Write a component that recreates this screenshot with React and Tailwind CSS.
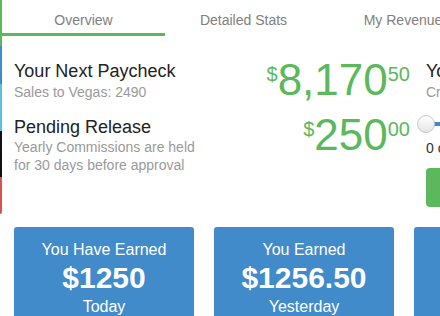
const font = { fontFamily: '"Liberation Sans", Arial, sans-serif' };

const Amount = ({ whole, cents }) => (
  <div className="flex items-start justify-end text-[#5cb85c]">
    <span className="text-[20px] leading-none mt-[6px]">$</span>
    <span className="text-[44px] leading-none">{whole}</span>
    <span className="text-[20px] leading-none mt-[6px]">{cents}</span>
  </div>
);

const EarnCard = ({ title, amount, when }) => (
  <div className="w-[180px] h-[120px] shrink-0 rounded-[3px] bg-[#428bca] text-white text-center pt-3">
    <div className="text-[16px] leading-[22px]">{title}</div>
    <div className="text-[30px] leading-[33px] font-bold">{amount}</div>
    <div className="text-[16px] leading-[22px] mt-[2px]">{when}</div>
  </div>
);

export default function App() {
  return (
    <div className="w-screen h-screen overflow-hidden bg-white" style={font}>
      <div className="flex w-[900px]">
        {/* collapsed side menu */}
        <div className="w-[2px] shrink-0 flex flex-col">
          <div className="h-[46px] bg-[#5cb85c]" />
          <div className="h-[38px] bg-[#428bca]" />
          <div className="h-[47px] bg-[#5bc0de]" />
          <div className="h-[46px] bg-[#111]" />
          <div className="h-[37px] bg-[#d9534f] rounded-br-[2px]" />
        </div>

        <div className="flex-1">
          {/* tabs */}
          <div className="flex text-[14px] leading-5 text-[#808080]">
            <div className="w-[163px] text-center pt-[10px] pb-[3px] border-b-[3px] border-[#5cb85c]">Overview</div>
            <div className="w-[157px] text-center pt-[10px] pb-[6px]">Detailed Stats</div>
            <div className="w-[169px] text-center pt-[10px] pb-[6px]">My Revenues</div>
          </div>

          <div className="pl-[12px] pt-[22px]">
            <div className="flex">
              <div className="w-[396px] shrink-0">
                <div className="flex justify-between">
                  <div className="pt-[3px]">
                    <div className="text-[18px] leading-5 text-[#222]">Your Next Paycheck</div>
                    <div className="text-[14px] leading-5 text-[#9a9a9a] mt-px">Sales to Vegas: 2490</div>
                  </div>
                  <Amount whole="8,170" cents="50" />
                </div>
                <div className="flex justify-between mt-[11px]">
                  <div className="pt-[4px]">
                    <div className="text-[18px] leading-5 text-[#222]">Pending Release</div>
                    <div className="text-[14px] leading-[18px] text-[#9a9a9a] mt-px">
                      Yearly Commissions are held
                      <br />
                      for 30 days before approval
                    </div>
                  </div>
                  <Amount whole="250" cents="00" />
                </div>
              </div>

              <div className="ml-[16px] w-[220px] shrink-0 pt-[3px]">
                <div className="text-[18px] leading-5 text-[#222]">Your Commission Rate</div>
                <div className="text-[14px] leading-5 text-[#9a9a9a] mt-px">Credits to spend</div>
                <div className="relative h-[18px] mt-[13px]">
                  <div className="absolute left-0 right-0 top-[7px] h-[4px] bg-[#428bca] rounded" />
                  <div className="absolute left-[-9px] top-0 w-[18px] h-[18px] rounded-full border border-[#c8c8c8] bg-gradient-to-b from-white to-[#e6e6e6]" />
                </div>
                <div className="text-[14px] leading-5 text-[#333] mt-[5px]">0 credits selected</div>
                <button className="mt-[10px] h-[39px] px-4 rounded-[4px] bg-[#5cb85c] text-white text-[14px]">
                  Apply Credits
                </button>
              </div>
            </div>

            <div className="flex gap-[20px] mt-[20px]">
              <EarnCard title="You Have Earned" amount="$1250" when="Today" />
              <EarnCard title="You Earned" amount="$1256.50" when="Yesterday" />
              <EarnCard title="You Earned" amount="$8170.50" when="This Month" />
            </div>
          </div>
        </div>
      </div>
    </div>
  );
}
